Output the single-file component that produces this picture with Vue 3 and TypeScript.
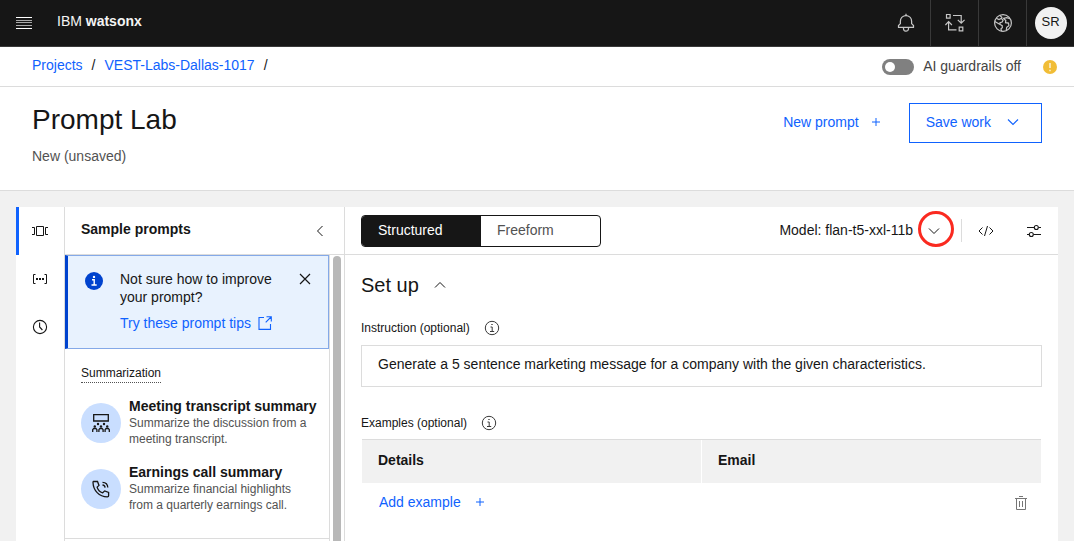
<script setup lang="ts">
import { ref } from 'vue'

interface Sample {
  title: string
  text: string
  icon: 'meeting' | 'phone'
}

const samples: Sample[] = [
  { title: 'Meeting transcript summary', text: 'Summarize the discussion from a meeting transcript.', icon: 'meeting' },
  { title: 'Earnings call summary', text: 'Summarize financial highlights from a quarterly earnings call.', icon: 'phone' },
]

const columns = ['Details', 'Email']
const mode = ref<'Structured' | 'Freeform'>('Structured')
const modes = ['Structured', 'Freeform'] as const
const guardrails = ref(false)
const instruction = ref('Generate a 5 sentence marketing message for a company with the given characteristics.')
</script>

<template>
  <div class="page">
    <header class="topbar">
      <button class="menu" aria-label="Menu">
        <svg width="16" height="12" viewBox="0 0 16 12"><path d="M0 .5h16M0 11.5h16" stroke="#fff" /><path d="M0 3.5h16M0 5.5h16M0 8.5h16" stroke="#a8a8a8" /></svg>
      </button>
      <span class="brand">IBM <b>watsonx</b></span>
      <nav class="tools" aria-label="Global">
        <button class="tool" aria-label="Notifications">
          <svg width="20" height="20" viewBox="0 0 32 32"><path d="M28.7 19.3 26 16.6V13a10 10 0 0 0-9-9.95V1h-2v2.05A10 10 0 0 0 6 13v3.6l-2.7 2.7A1 1 0 0 0 3 20v3a1 1 0 0 0 1 1h7v.8a5.1 5.1 0 0 0 4.5 5.2 5 5 0 0 0 5.5-5v-1h7a1 1 0 0 0 1-1v-3a1 1 0 0 0-.3-.7ZM19 25a3 3 0 0 1-6 0v-1h6Zm8-3H5v-1.6l2.7-2.7A1 1 0 0 0 8 17v-4a8 8 0 0 1 16 0v4a1 1 0 0 0 .3.7l2.7 2.7Z" fill="#c6c6c6" /></svg>
        </button>
        <button class="tool" aria-label="Switch data">
          <svg width="20" height="20" viewBox="0 0 20 20" fill="none" stroke="#c6c6c6" stroke-width="1.2"><path d="M1.5 1.5h3.6v3.6H1.5zM14.2 14.2h3.6v3.6h-3.6zM8 2.5h8.2v7M12.8 6.8l3.4 3.4 3.4-3.4M11.5 16.8H3.6V9M.4 12l3.2-3.3L6.9 12" /></svg>
        </button>
        <button class="tool" aria-label="Region">
          <svg width="20" height="20" viewBox="0 0 20 20" fill="none" stroke="#c6c6c6" stroke-width="1.2"><circle cx="10" cy="10" r="8.4" /><path d="M3.2 5.2 6 6.6 8.2 5.4l1.9 1.7-.9 2-2.2.6.1 1.8 2.1 1.2.1 2.1-1.4 1.1.8 2.4M1.8 8.6l5.3 3M6.8 2.4l2.5 2.4M17 5.6l-3.4-.9-3 .6 2.2 2.2-.3 2.2 3 .4.4 2.6-2.2 1.7-.4 2.6" /></svg>
        </button>
        <button class="tool account" aria-label="Account"><span class="avatar">SR</span></button>
      </nav>
    </header>

    <div class="crumbs">
      <nav class="trail" aria-label="Breadcrumb">
        <a href="#">Projects</a><span>/</span><a href="#">VEST-Labs-Dallas-1017</a><span>/</span>
      </nav>
      <label class="guard"><input v-model="guardrails" type="checkbox" role="switch" /><span>AI guardrails off</span></label>
      <svg width="14" height="14" viewBox="0 0 14 14" role="img" aria-label="Warning"><circle cx="7" cy="7" r="7" fill="#f1bd36" /><path d="M7 3v5M7 9.8v1.4" stroke="#fff" stroke-width="1.2" /></svg>
    </div>

    <section class="heading">
      <div class="titles">
        <h1>Prompt Lab</h1>
        <p>New (unsaved)</p>
      </div>
      <button class="ghost">New prompt
        <svg width="10" height="10" viewBox="0 0 10 10" stroke="currentColor"><path d="M5 1v8M1 5h8" /></svg>
      </button>
      <button class="save">Save work
        <svg width="12" height="8" viewBox="0 0 12 8" fill="none" stroke="currentColor" stroke-width="1.1"><path d="m1 1.5 5 5 5-5" /></svg>
      </button>
    </section>

    <main class="workspace">
      <nav class="rail" aria-label="Panels">
        <button class="railitem active" aria-label="Sample prompts">
          <svg width="16" height="12" viewBox="0 0 16 12" fill="none" stroke="#161616"><path d="M4.5 1.5h7v9h-7zM0 2.5h2.5v7H0M16 2.5h-2.5v7H16" /></svg>
        </button>
        <button class="railitem" aria-label="Prompt variables">
          <svg width="16" height="12" viewBox="0 0 16 12" fill="none" stroke="#161616"><path d="M3.500 1.500h-2v9h2M12.500 1.500h2v9h-2" /><path d="M4 6h2M7 6h2M10 6h2" stroke-width="2" /></svg>
        </button>
        <button class="railitem" aria-label="History">
          <svg width="16" height="16" viewBox="0 0 16 16" fill="none" stroke="#161616" stroke-width="1.1"><circle cx="8" cy="8" r="6.600" /><path d="M7.600 3.500V8l2.800 3" /></svg>
        </button>
      </nav>

      <aside class="samples">
        <div class="panelhead">
          <h2>Sample prompts</h2>
          <button aria-label="Collapse panel"><svg width="8" height="12" viewBox="0 0 8 12" fill="none" stroke="#161616"><path d="M6.500 1 1.500 6l5 5" /></svg></button>
        </div>
        <div class="scroller">
          <div class="list">
            <div class="notice">
              <svg class="noticeicon" width="18" height="18" viewBox="0 0 18 18"><circle cx="9" cy="9" r="9" fill="#0043ce" /><circle cx="9" cy="4.900" r="1.200" fill="#fff" /><path d="M7 7.800h2.200v5M6.500 13h5.200" stroke="#fff" stroke-width="1.400" fill="none" /></svg>
              <div class="noticebody">
                <p>Not sure how to improve your prompt?</p>
                <a href="#">Try these prompt tips
                  <svg width="14" height="14" viewBox="0 0 14 14" fill="none" stroke="currentColor" stroke-width="1.100"><path d="M6 1.500H1v11.900h11.500V8M8.500.7h4.800v4.800M13 1 7.700 6.300" /></svg>
                </a>
              </div>
              <button class="close" aria-label="Close"><svg width="12" height="12" viewBox="0 0 12 12" stroke="#161616" stroke-width="1.200"><path d="m1 1 10 10M11 1 1 11" /></svg></button>
            </div>
            <div class="group">
              <h3>Summarization</h3>
              <a v-for="s in samples" :key="s.title" href="#" class="sample">
                <span class="disc">
                  <svg v-if="s.icon === 'meeting'" width="20" height="20" viewBox="0 0 20 20" fill="none" stroke="#161616" stroke-width="1.300"><path d="M2.700 1.700h14.600v6.300H2.700z" /><path d="M1.700 19v-2.300l1-1.200h2.200l1 1.200V19M7.900 19v-2.300l1-1.200h2.200l1 1.200V19M14.100 19v-2.300l1-1.200h2.200l1 1.200V19" /><g fill="#161616" stroke="none"><circle cx="3.800" cy="13.500" r="1.200" /><circle cx="10" cy="13.500" r="1.200" /><circle cx="16.200" cy="13.500" r="1.200" /><circle cx="7" cy="11" r="1.200" /><circle cx="13" cy="11" r="1.200" /></g></svg>
                  <svg v-else width="20" height="20" viewBox="0 0 20 20" fill="none" stroke="#161616" stroke-width="1.300"><path d="M2.300 2.500h4.200l1.500 3.900-1.900 1.700c.7 2.700 2.400 4.800 5.600 5.700l2-1.900 3.900 1.600v3.300c0 .7-.5 1.100-1.200 1.100C8 17.700 2.300 11.500 2 3.500c0-.6.1-1 .3-1Z" /><path d="M11.500 6c1.600.1 2.500 1 2.600 2.600M11.500 3.300c3.300.1 5.200 2 5.300 5.300" /></svg>
                </span>
                <span class="sampletext"><b>{{ s.title }}</b><span>{{ s.text }}</span></span>
              </a>
            </div>
          </div>
          <div class="track"><div class="thumb"></div></div>
        </div>
      </aside>

      <section class="editor">
        <div class="toolbar">
          <div class="switcher" role="tablist">
            <button v-for="m in modes" :key="m" role="tab" :aria-selected="mode === m" :class="{ on: mode === m }" @click="mode = m">{{ m }}</button>
          </div>
          <span class="model">Model: flan-t5-xxl-11b</span>
          <button class="pick" aria-label="Choose model"><svg width="12" height="8" viewBox="0 0 12 8" fill="none" stroke="#161616"><path d="m1 1.500 5 5 5-5" /></svg></button>
          <span class="divider"></span>
          <button class="action" aria-label="View code"><svg width="16" height="12" viewBox="0 0 16 12" fill="none" stroke="#161616"><path d="M4.500 2.500 1 6l3.500 3.500M11.500 2.500 15 6l-3.500 3.500M9.500 1l-3 10" /></svg></button>
          <button class="action" aria-label="Model parameters"><svg width="16" height="14" viewBox="0 0 16 14" fill="none" stroke="#161616" stroke-width="1.100"><path d="M1 3.500h7M12.500 3.500H15M1 10.500h2M7.500 10.500H15" /><circle cx="10.300" cy="3.500" r="2" /><circle cx="5.300" cy="10.500" r="2" /></svg></button>
        </div>

        <div class="form">
          <h2 class="setup">Set up
            <button aria-label="Collapse set up"><svg width="12" height="8" viewBox="0 0 12 8" fill="none" stroke="#161616"><path d="m1 6.500 5-5 5 5" /></svg></button>
          </h2>
          <div class="label">
            <label for="instruction">Instruction (optional)</label>
            <svg width="16" height="16" viewBox="0 0 16 16" fill="none" stroke="#393939"><circle cx="8" cy="8" r="6.700" /><path d="M6.500 7h1.700v4.500M6 11.500h4.200M7.300 4.500h1.400" /></svg>
          </div>
          <input id="instruction" v-model="instruction" class="field" type="text" />
          <div class="label second">
            <span id="examples">Examples (optional)</span>
            <svg width="16" height="16" viewBox="0 0 16 16" fill="none" stroke="#393939"><circle cx="8" cy="8" r="6.700" /><path d="M6.500 7h1.700v4.500M6 11.500h4.200M7.300 4.500h1.400" /></svg>
          </div>
          <div class="tablebox">
            <table aria-labelledby="examples">
              <thead><tr><th v-for="c in columns" :key="c" scope="col">{{ c }}</th></tr></thead>
              <tbody><tr><td :colspan="columns.length">
                <div class="row">
                  <button class="add">Add example
                    <svg width="10" height="10" viewBox="0 0 10 10" stroke="currentColor"><path d="M5 1v8M1 5h8" /></svg>
                  </button>
                  <button class="trash" aria-label="Delete"><svg width="12" height="14" viewBox="0 0 12 14" fill="none" stroke="#767676"><path d="M0 2.500h12M4 .5h4M1.500 2.500v11h9v-11M4.500 5v6M7.500 5v6" /></svg></button>
                </div>
              </td></tr></tbody>
            </table>
          </div>
        </div>
      </section>
    </main>
  </div>
</template>

<style>
body { background: #f1f1f1; }
</style>

<style scoped>
* { box-sizing: border-box; }
.page { height: 100vh; min-height: 540px; display: flex; flex-direction: column; overflow: hidden; background: #f1f1f1; color: #161616; font-family: "Liberation Sans", Arial, sans-serif; font-size: 14px; line-height: 18px; }
h1, h2, h3, p { margin: 0; font-weight: 400; }
button { display: flex; align-items: center; padding: 0; border: 0; background: none; color: inherit; font: inherit; cursor: pointer; }
a { color: #0f62fe; text-decoration: none; }
svg { flex: none; display: block; }

.topbar { flex: none; display: flex; height: 47px; background: #161616; color: #f4f4f4; border-bottom: 1px solid #393939; }
.menu { width: 48px; justify-content: center; }
.brand { padding: 12px 0 0 9px; }
.tools { display: flex; margin-left: auto; }
.tool { width: 48px; justify-content: center; }
.tool + .tool { border-left: 1px solid #393939; }
.avatar { width: 32px; height: 32px; border-radius: 50%; background: #f1f1f1; color: #161616; line-height: 30px; text-align: center; font-size: 13px; }

.crumbs { flex: none; display: flex; align-items: center; height: 40px; padding: 0 17px 0 32px; background: #fff; border-bottom: 1px solid #dcdcdc; }
.trail { display: flex; gap: 9px; padding-bottom: 4px; }
.guard { display: flex; align-items: center; gap: 9px; margin: 0 22px 0 auto; color: #444; }
.guard span { padding-bottom: 2px; }
.guard input { appearance: none; display: flex; align-items: center; width: 32px; height: 16px; margin: 0; padding: 0 3px; border-radius: 8px; background: #808080; }
.guard input::before { content: ""; width: 10px; height: 10px; border-radius: 50%; background: #fff; }
.guard input:checked { background: #198038; justify-content: flex-end; }

.heading { flex: none; display: flex; align-items: flex-start; height: 104px; padding: 16px 32px 0; background: #fff; border-bottom: 1px solid #dcdcdc; color: #0f62fe; }
.titles { margin-right: auto; }
.titles h1 { color: #161616; font-size: 28px; line-height: 34px; }
.titles p { margin-top: 10px; color: #525252; }
.ghost { height: 38px; gap: 12px; margin-right: 28px; }
.save { height: 40px; gap: 16px; padding: 0 22px 2px 16px; border: 1px solid #0f62fe; }

.workspace { flex: 1; display: flex; min-height: 0; margin: 16px 16px 0; background: #fff; }
.rail { flex: none; width: 49px; border-right: 1px solid #dcdcdc; }
.railitem { width: 48px; height: 48px; justify-content: center; }
.active { border-left: 3px solid #0f62fe; padding-right: 3px; }

.samples { flex: none; display: flex; flex-direction: column; width: 280px; border-right: 1px solid #dcdcdc; }
.panelhead { flex: none; display: flex; align-items: center; justify-content: space-between; height: 48px; padding: 0 20px 0 16px; border-bottom: 1px solid #dcdcdc; }
.panelhead h2 { padding-bottom: 4px; font-size: 14px; font-weight: 700; }
.scroller { flex: 1; display: flex; min-height: 0; overflow: hidden; }
.list { flex: 1; min-width: 0; }
.notice { display: flex; align-items: flex-start; height: 94px; padding: 14px 17px 0; background: #e8f2fe; border: 1px solid #84a9e8; border-left: 3px solid #0043ce; }
.noticeicon { margin: 2px 17px 0 0; }
.noticebody { flex: 1; }
.noticebody p { margin-bottom: 8px; }
.noticebody a { display: flex; align-items: center; gap: 7px; }
.close { margin-top: 3px; }
.group { height: 190px; padding: 14px 8px 0 16px; border-bottom: 1px solid #dcdcdc; }
.group h3 { display: inline-block; margin-bottom: 14px; border-bottom: 1px dotted #525252; font-size: 12px; }
.sample { display: flex; align-items: center; gap: 8px; height: 50px; margin-bottom: 16px; color: #161616; }
.disc { flex: none; display: grid; place-items: center; width: 40px; height: 40px; margin-top: 2px; border-radius: 50%; background: #c9deff; }
.sampletext { display: flex; flex-direction: column; padding-right: 8px; }
.sampletext b { white-space: nowrap; }
.sampletext span { color: #525252; font-size: 12px; line-height: 16px; }
.track { flex: none; width: 15px; padding: 1px 3px 0; border-left: 1px solid #dcdcdc; background: #fff; }
.thumb { width: 8px; height: 100%; border-radius: 4px 4px 0 0; background: #b8b8b8; }

.editor { flex: 1; min-width: 0; }
.toolbar { display: flex; align-items: center; height: 48px; padding: 0 16px; border-bottom: 1px solid #dcdcdc; }
.switcher { display: flex; width: 240px; height: 32px; margin-right: auto; overflow: hidden; border: 1px solid #161616; border-radius: 4px; }
.switcher button { flex: 1; padding: 0 16px 2px; color: #525252; }
.switcher button.on { background: #161616; color: #fff; }
.model { padding-bottom: 2px; }
.pick { justify-content: center; width: 36px; height: 36px; margin: 0 7px 4px 5px; border: 3px solid #fa2a20; border-radius: 50%; padding: 4px 5px 0 0; }
.divider { width: 1px; height: 23px; background: #dcdcdc; }
.action { width: 16px; margin-left: 16px; justify-content: center; }
.action + .action { margin-left: 32px; }
.form { padding: 17px 16px 0; }
.setup { display: flex; align-items: center; gap: 15px; font-size: 20px; line-height: 26px; }
.label { display: flex; align-items: center; gap: 14px; height: 20px; margin: 20px 0 7px; font-size: 12px; }
.field { display: block; width: 100%; height: 42px; margin: 0; padding: 0 16px 4px; border: 1px solid #dcdcdc; outline: 0; background: #fff; color: #161616; font: inherit; }
.second { margin: 26px 0 6px; }
.tablebox { padding: 0 1px; }
table { width: 100%; border-collapse: collapse; table-layout: fixed; }
th { height: 43px; padding: 0 16px 3px; border-top: 1px solid #dcdcdc; background: #f1f1f1; text-align: left; }
th + th { border-left: 1px solid #fff; }
td { padding: 0 14px 0 17px; }
.row { display: flex; align-items: center; justify-content: space-between; height: 40px; }
.add { gap: 14px; padding-bottom: 2px; color: #0f62fe; }
</style>
